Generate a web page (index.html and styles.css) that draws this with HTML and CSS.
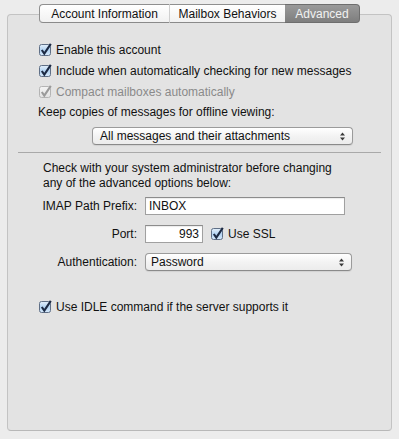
FILE: index.html
```html
<!doctype html>
<html lang="en">
<head>
<meta charset="UTF-8">
<title>Advanced</title>
<link rel="stylesheet" href="styles.css">
</head>
<body>
<svg class="defs" width="0" height="0">
	<defs>
		<linearGradient id="cbfill" x1="0" y1="0" x2="0" y2="1">
			<stop offset="0" stop-color="#e4f0fb"/>
			<stop offset="0.5" stop-color="#b3d3f2"/>
			<stop offset="1" stop-color="#d6e9fb"/>
		</linearGradient>
		<linearGradient id="cboff" x1="0" y1="0" x2="0" y2="1">
			<stop offset="0" stop-color="#f4f4f4"/>
			<stop offset="1" stop-color="#e2e2e2"/>
		</linearGradient>
	</defs>
</svg>
<div class="tabbox">
	<div class="tabs">
		<span class="tab first">Account Information</span>
		<span class="tab mid">Mailbox Behaviors</span>
		<span class="tab on">Advanced</span>
	</div>
	<div class="pane">
		<div class="check">
			<svg class="cb" width="14" height="14" viewBox="0 0 14 14"><rect x="0.5" y="1.5" width="11" height="11" rx="2" fill="url(#cbfill)" stroke="#5f6f86"/><path d="M2.8 7 L5.3 10.6 L11.8 0.8" fill="none" stroke="#1c2a44" stroke-width="2.1"/></svg>
			<span>Enable this account</span>
		</div>
		<div class="check">
			<svg class="cb" width="14" height="14" viewBox="0 0 14 14"><rect x="0.5" y="1.5" width="11" height="11" rx="2" fill="url(#cbfill)" stroke="#5f6f86"/><path d="M2.8 7 L5.3 10.6 L11.8 0.8" fill="none" stroke="#1c2a44" stroke-width="2.1"/></svg>
			<span>Include when automatically checking for new messages</span>
		</div>
		<div class="check off">
			<svg class="cb" width="14" height="14" viewBox="0 0 14 14"><rect x="0.5" y="1.5" width="11" height="11" rx="2" fill="url(#cboff)" stroke="#b4b4b4"/><path d="M2.8 7 L5.3 10.6 L11.8 0.8" fill="none" stroke="#9a9a9a" stroke-width="2.1"/></svg>
			<span>Compact mailboxes automatically</span>
		</div>
		<div class="keep">Keep copies of messages for offline viewing:</div>
		<div class="popup wide">
			<span>All messages and their attachments</span>
			<svg class="arrows" width="5" height="9" viewBox="0 0 5 9"><path d="M0 3.5 L2.5 0.5 L5 3.5 Z M0 5.5 L2.5 8.5 L5 5.5 Z" fill="#3a3a3a"/></svg>
		</div>
		<div class="sep"></div>
		<p class="note">Check with your system administrator before changing<br>any of the advanced options below:</p>
		<div class="row first">
			<label class="lbl">IMAP Path Prefix:</label>
			<div class="field prefix">INBOX</div>
		</div>
		<div class="row">
			<label class="lbl">Port:</label>
			<div class="field port">993</div>
			<div class="check ssl">
				<svg class="cb" width="14" height="14" viewBox="0 0 14 14"><rect x="0.5" y="1.5" width="11" height="11" rx="2" fill="url(#cbfill)" stroke="#5f6f86"/><path d="M2.8 7 L5.3 10.6 L11.8 0.8" fill="none" stroke="#1c2a44" stroke-width="2.1"/></svg>
				<span>Use SSL</span>
			</div>
		</div>
		<div class="row">
			<label class="lbl">Authentication:</label>
			<div class="popup auth">
				<span>Password</span>
				<svg class="arrows" width="5" height="9" viewBox="0 0 5 9"><path d="M0 3.5 L2.5 0.5 L5 3.5 Z M0 5.5 L2.5 8.5 L5 5.5 Z" fill="#3a3a3a"/></svg>
			</div>
		</div>
		<div class="check idle">
			<svg class="cb" width="14" height="14" viewBox="0 0 14 14"><rect x="0.5" y="1.5" width="11" height="11" rx="2" fill="url(#cbfill)" stroke="#5f6f86"/><path d="M2.8 7 L5.3 10.6 L11.8 0.8" fill="none" stroke="#1c2a44" stroke-width="2.1"/></svg>
			<span>Use IDLE command if the server supports it</span>
		</div>
	</div>
</div>
</body>
</html>
```
FILE: styles.css
```css
*{ margin:0; padding:0; box-sizing:border-box;}
body{
	background-color:#ececec;
	font-family:"Liberation Sans", Arial, sans-serif;
	font-size:12px;
	color:#111;
	width:399px;
	height:439px;
	overflow:hidden;
}
.defs{ position:absolute; width:0; height:0;}
.tabbox{
	margin:14px 7px 0 7px;
	height:417px;
	border:1px solid #c3c3c3;
	border-bottom-color:#b8b8b8;
	border-radius:4px;
	background-color:#e3e3e3;
}
.tabs{
	display:flex;
	justify-content:center;
	margin-top:-11px;
}
.tab{
	display:flex;
	align-items:center;
	justify-content:center;
	height:19px;
	white-space:nowrap;
	background:linear-gradient(#ffffff, #f1f1f1);
	border-top:1px solid #8f8f8f;
	border-bottom:1px solid #8a8a8a;
	font-size:12px;
	color:#111;
}
.tab.first{
	width:131px;
	border-left:1px solid #8f8f8f;
	border-radius:4px 0 0 4px;
	border-right:1px solid #cfcfcf;
}
.tab.mid{ width:115px;}
.tab.on{
	width:75px;
	background:linear-gradient(#9a9a9a, #7e7e7e);
	border-color:#6e6e6e;
	border-right:1px solid #6e6e6e;
	border-radius:0 4px 4px 0;
	color:#f2f2f2;
}
.pane{
	padding:16px 0 0 0;
}
.check{
	display:flex;
	align-items:center;
	height:21px;
	padding-left:31px;
}
.cb{
	flex:none;
	margin-right:3px;
}
.check.off{ color:#8a8a8a;}
.keep{
	height:21px;
	line-height:21px;
	padding-left:30px;
}
.popup{
	display:flex;
	align-items:center;
	justify-content:space-between;
	height:18px;
	border:1px solid #9b9b9b;
	border-bottom-color:#8a8a8a;
	border-radius:4px;
	background:linear-gradient(#ffffff, #f3f3f3 50%, #ececec);
	box-shadow:0 1px 1px rgba(0,0,0,0.08);
	padding:0 7px 0 7px;
}
.popup.wide{
	width:261px;
	margin:4px 0 0 84px;
}
.arrows{ flex:none;}
.sep{
	height:1px;
	margin:7px 10px 0 10px;
	background-color:#a9a9a9;
}
.note{
	margin:8px 0 0 35px;
	line-height:15px;
}
.row{
	display:flex;
	align-items:center;
	height:18px;
	margin-top:10px;
}
.row.first{ margin-top:6px;}
.lbl{
	width:129px;
	margin-right:8px;
	text-align:right;
}
.field{
	height:18px;
	line-height:16px;
	border:1px solid #a0a0a0;
	border-top-color:#8c8c8c;
	background-color:#fff;
	box-shadow:inset 0 1px 1px rgba(0,0,0,0.08);
	padding:0 3px;
}
.prefix{ width:200px;}
.port{
	width:58px;
	text-align:right;
}
.check.ssl{
	padding-left:8px;
	height:18px;
}
.popup.auth{
	width:207px;
	padding-left:5px;
}
.check.idle{
	margin-top:25px;
}
```
